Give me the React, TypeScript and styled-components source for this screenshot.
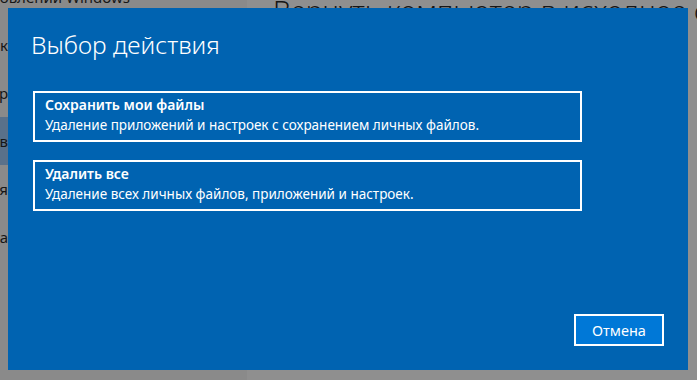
import React from "react";
import styled, { createGlobalStyle } from "styled-components";

const GlobalStyle = createGlobalStyle`
    html, body {
        margin: 0;
        padding: 0;
        background: #8f8f8f;
    }
    * {
        box-sizing: border-box;
    }
`;

const Screen = styled.div`
    position: relative;
    width: 697px;
    height: 380px;
    overflow: hidden;
    display: flex;
    font-family: "Noto Sans", "Open Sans", sans-serif;
    color: #161616;
`;

// затемнённое окно параметров за диалогом
const Nav = styled.nav`
    width: 247px;
    flex-shrink: 0;
    background: #8a8a8a;
    display: flex;
    flex-direction: column;
`;

const NavCaption = styled.div`
    height: 21px;
    width: 130px;
    display: flex;
    justify-content: flex-end;
    align-items: flex-start;
    font-size: 15px;
    line-height: 0;
    white-space: nowrap;
    & > span {
        margin-top: -3px;
    }
`;

const NavItem = styled.div<{ $active?: boolean }>`
    height: 48px;
    display: flex;
    align-items: center;
    background: ${(p) => (p.$active ? "#5a718a" : "transparent")};
    font-size: 15px;
`;

const NavLabel = styled.span`
    width: 8px;
    display: flex;
    justify-content: flex-end;
    white-space: nowrap;
`;

const Content = styled.main`
    flex: 1;
    min-width: 0;
    background: #8f8f8f;
    padding-left: 26px;
`;

const PageTitle = styled.h1`
    margin: 0;
    font-size: 28px;
    line-height: 20px;
    font-weight: 300;
    white-space: nowrap;
`;

// сам диалог
const Dialog = styled.section`
    position: absolute;
    left: 8px;
    top: 8px;
    width: 680px;
    height: 362px;
    background: #0063b1;
    color: #fff;
    padding: 21px 24px 24px 25px;
    display: flex;
    flex-direction: column;
`;

const Title = styled.h2`
    margin: 0 0 30px -2px;
    font-size: 24.5px;
    line-height: 32px;
    font-weight: 300;
`;

const Options = styled.div`
    display: flex;
    flex-direction: column;
    gap: 18px;
`;

const Option = styled.button`
    width: 549px;
    height: 51px;
    border: 2px solid #fff;
    background: transparent;
    color: #fff;
    padding: 2px 10px 0;
    text-align: left;
    font-family: inherit;
    cursor: pointer;
    display: flex;
    flex-direction: column;
`;

const OptionTitle = styled.span`
    font-size: 14px;
    line-height: 20px;
    font-weight: 600;
`;

const OptionText = styled.span`
    font-size: 13.5px;
    line-height: 20px;
`;

const Footer = styled.div`
    margin-top: auto;
    display: flex;
    justify-content: flex-end;
`;

const CancelButton = styled.button`
    width: 90px;
    height: 32px;
    border: 2px solid #fff;
    background: #0078d7;
    color: #fff;
    font-family: inherit;
    font-size: 14.5px;
    padding: 0;
    cursor: pointer;
`;

const navItems = [
    { label: "Устранение неполадок" },
    { label: "Центр" },
    { label: "Архив", active: true },
    { label: "Активация" },
    { label: "Для разработчика" },
];

const options = [
    {
        title: "Сохранить мои файлы",
        text: "Удаление приложений и настроек с сохранением личных файлов.",
    },
    {
        title: "Удалить все",
        text: "Удаление всех личных файлов, приложений и настроек.",
    },
];

export default function App() {
    return (
        <>
            <GlobalStyle />
            <Screen>
                <Nav>
                    <NavCaption>
                        <span>Журнал обновлений Windows</span>
                    </NavCaption>
                    {navItems.map((item) => (
                        <NavItem key={item.label} $active={item.active}>
                            <NavLabel>{item.label}</NavLabel>
                        </NavItem>
                    ))}
                </Nav>
                <Content>
                    <PageTitle>Вернуть компьютер в исходное состояние</PageTitle>
                </Content>

                <Dialog>
                    <Title>Выбор действия</Title>
                    <Options>
                        {options.map((o) => (
                            <Option key={o.title}>
                                <OptionTitle>{o.title}</OptionTitle>
                                <OptionText>{o.text}</OptionText>
                            </Option>
                        ))}
                    </Options>
                    <Footer>
                        <CancelButton>Отмена</CancelButton>
                    </Footer>
                </Dialog>
            </Screen>
        </>
    );
}
